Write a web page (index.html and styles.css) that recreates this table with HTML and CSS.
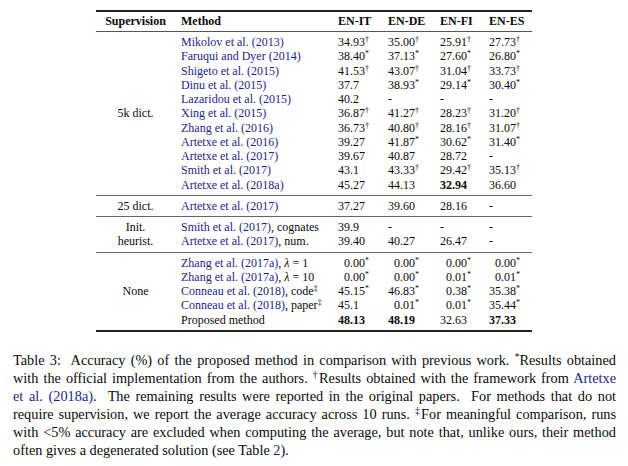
FILE: index.html
```html
<!DOCTYPE html>
<html>
<head>
<meta charset="utf-8">
<link rel="stylesheet" href="styles.css">
</head>
<body>
<div class="page">
<table class="results">
<colgroup>
<col class="c-sup"><col class="c-method"><col class="c-it"><col class="c-de"><col class="c-fi"><col class="c-es">
</colgroup>
<thead>
<tr><th class="supcol">Supervision</th><th>Method</th><th>EN-IT</th><th>EN-DE</th><th>EN-FI</th><th>EN-ES</th></tr>
</thead>
<tbody class="grp first">
<tr><td rowspan="11" class="supcol">5k dict.</td><td><span class="cite">Mikolov et al. (2013)</span></td><td>34.93<sup>†</sup></td><td>35.00<sup>†</sup></td><td>25.91<sup>†</sup></td><td>27.73<sup>†</sup></td></tr>
<tr><td><span class="cite">Faruqui and Dyer (2014)</span></td><td>38.40<sup>*</sup></td><td>37.13<sup>*</sup></td><td>27.60<sup>*</sup></td><td>26.80<sup>*</sup></td></tr>
<tr><td><span class="cite">Shigeto et al. (2015)</span></td><td>41.53<sup>†</sup></td><td>43.07<sup>†</sup></td><td>31.04<sup>†</sup></td><td>33.73<sup>†</sup></td></tr>
<tr><td><span class="cite">Dinu et al. (2015)</span></td><td>37.7</td><td>38.93<sup>*</sup></td><td>29.14<sup>*</sup></td><td>30.40<sup>*</sup></td></tr>
<tr><td><span class="cite">Lazaridou et al. (2015)</span></td><td>40.2</td><td>-</td><td>-</td><td>-</td></tr>
<tr><td><span class="cite">Xing et al. (2015)</span></td><td>36.87<sup>†</sup></td><td>41.27<sup>†</sup></td><td>28.23<sup>†</sup></td><td>31.20<sup>†</sup></td></tr>
<tr><td><span class="cite">Zhang et al. (2016)</span></td><td>36.73<sup>†</sup></td><td>40.80<sup>†</sup></td><td>28.16<sup>†</sup></td><td>31.07<sup>†</sup></td></tr>
<tr><td><span class="cite">Artetxe et al. (2016)</span></td><td>39.27</td><td>41.87<sup>*</sup></td><td>30.62<sup>*</sup></td><td>31.40<sup>*</sup></td></tr>
<tr><td><span class="cite">Artetxe et al. (2017)</span></td><td>39.67</td><td>40.87</td><td>28.72</td><td>-</td></tr>
<tr><td><span class="cite">Smith et al. (2017)</span></td><td>43.1</td><td>43.33<sup>†</sup></td><td>29.42<sup>†</sup></td><td>35.13<sup>†</sup></td></tr>
<tr><td><span class="cite">Artetxe et al. (2018a)</span></td><td>45.27</td><td>44.13</td><td><b>32.94</b></td><td>36.60</td></tr>
</tbody>
<tbody class="grp">
<tr><td class="supcol">25 dict.</td><td><span class="cite">Artetxe et al. (2017)</span></td><td>37.27</td><td>39.60</td><td>28.16</td><td>-</td></tr>
</tbody>
<tbody class="grp">
<tr><td rowspan="2" class="supcol">Init.<br>heurist.</td><td><span class="cite">Smith et al. (2017)</span>, cognates</td><td>39.9</td><td>-</td><td>-</td><td>-</td></tr>
<tr><td><span class="cite">Artetxe et al. (2017)</span>, num.</td><td>39.40</td><td>40.27</td><td>26.47</td><td>-</td></tr>
</tbody>
<tbody class="grp last">
<tr><td rowspan="5" class="supcol">None</td><td><span class="cite">Zhang et al. (2017a)</span>, <i>λ</i> = 1</td><td class="ph">0.00<sup>*</sup></td><td class="ph">0.00<sup>*</sup></td><td class="ph">0.00<sup>*</sup></td><td class="ph">0.00<sup>*</sup></td></tr>
<tr><td><span class="cite">Zhang et al. (2017a)</span>, <i>λ</i> = 10</td><td class="ph">0.00<sup>*</sup></td><td class="ph">0.00<sup>*</sup></td><td class="ph">0.01<sup>*</sup></td><td class="ph">0.01<sup>*</sup></td></tr>
<tr><td><span class="cite">Conneau et al. (2018)</span>, code<sup>‡</sup></td><td>45.15<sup>*</sup></td><td>46.83<sup>*</sup></td><td class="ph">0.38<sup>*</sup></td><td>35.38<sup>*</sup></td></tr>
<tr><td><span class="cite">Conneau et al. (2018)</span>, paper<sup>‡</sup></td><td>45.1</td><td class="ph">0.01<sup>*</sup></td><td class="ph">0.01<sup>*</sup></td><td>35.44<sup>*</sup></td></tr>
<tr><td>Proposed method</td><td><b>48.13</b></td><td><b>48.19</b></td><td>32.63</td><td><b>37.33</b></td></tr>
</tbody>
</table>

<p class="caption">
<span class="ln">Table 3:&nbsp; Accuracy (%) of the proposed method in comparison with previous work. <sup>*</sup>Results obtained</span>
<span class="ln">with the official implementation from the authors. <sup>†</sup>Results obtained with the framework from <span class="cite">Artetxe</span></span>
<span class="ln"><span class="cite">et al. (2018a)</span>.&nbsp; The remaining results were reported in the original papers.&nbsp; For methods that do not</span>
<span class="ln">require supervision, we report the average accuracy across 10 runs. <sup>‡</sup>For meaningful comparison, runs</span>
<span class="ln">with &lt;5% accuracy are excluded when computing the average, but note that, unlike ours, their method</span>
<span class="ln end">often gives a degenerated solution (see Table <span class="cite">2</span>).</span>
</p>
</div>
</body>
</html>
```

FILE: styles.css
```css
html, body {
  margin: 0;
  padding: 0;
  background: #ffffff;
}

.page {
  width: 628px;
  height: 466px;
  overflow: hidden;
  padding-top: 10px;
  box-sizing: border-box;
  font-family: "Liberation Serif", "Times New Roman", serif;
  color: #0a0a0a;
}

.results {
  margin-left: 96px;
  width: 436px;
  table-layout: fixed;
  border-collapse: separate;
  border-spacing: 0;
  font-size: 12px;
  line-height: 14.25px;
}

.c-sup { width: 79px; }
.c-method { width: 157px; }
.c-it { width: 50px; }
.c-de { width: 52px; }
.c-fi { width: 49px; }
.c-es { width: 49px; }

.results th,
.results td {
  padding: 0 0 0 6px;
  text-align: left;
  vertical-align: middle;
  white-space: nowrap;
}

.results th {
  font-weight: bold;
  height: 19px;
  border-top: 2px solid #222;
  border-bottom: 1px solid #555;
  padding-top: 0;
  padding-bottom: 0;
}

.results .supcol {
  text-align: center;
  padding-left: 0;
}

.results td.ph {
  padding-left: 12px;
}

.grp tr:first-child td {
  padding-top: 3px;
}

.grp tr:last-child td {
  padding-bottom: 3px;
}

.grp + .grp tr:first-child td {
  border-top: 1px solid #666;
}

.grp.last tr:last-child td,
.grp.last td[rowspan] {
  border-bottom: 2px solid #222;
}

.grp td[rowspan] {
  padding-top: 3px;
  padding-bottom: 3px;
}

.cite {
  color: #1e1e86;
}

sup {
  font-size: 8px;
  line-height: 0;
  vertical-align: 4px;
}

.caption {
  margin: 19px 0 0 13px;
  width: 603px;
  font-size: 14.3px;
  line-height: 18px;
}

.caption .ln {
  display: block;
  text-align: justify;
  text-align-last: justify;
}

.caption .ln.end {
  text-align-last: left;
}

.caption sup {
  font-size: 9.5px;
  vertical-align: 5px;
}
```
